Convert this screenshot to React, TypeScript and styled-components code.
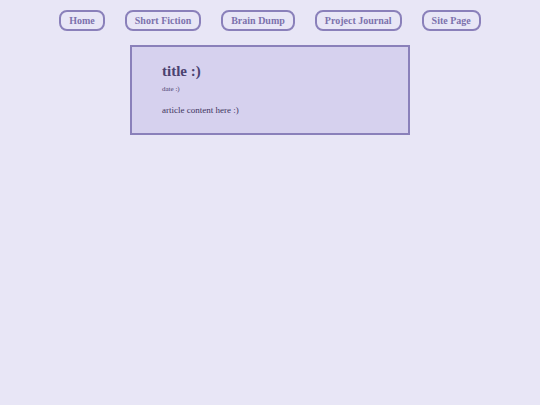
import styled, { createGlobalStyle } from 'styled-components';

const GlobalStyle = createGlobalStyle`
  html, body {
    margin: 0;
    padding: 0;
    background: #e8e6f6;
  }
  body {
    font-family: "Liberation Serif", "Times New Roman", serif;
    min-height: 405px;
  }
`;

const Nav = styled.nav`
  display: flex;
  justify-content: center;
  gap: 20px;
  padding-top: 10px;
`;

const NavButton = styled.a`
  display: flex;
  align-items: center;
  height: 21px;
  box-sizing: border-box;
  padding: 0 8px;
  border: 2px solid #8a80ba;
  border-radius: 8px;
  color: #7c72ad;
  font-size: 10px;
  font-weight: bold;
  text-decoration: none;
`;

const Article = styled.article`
  width: 280px;
  box-sizing: border-box;
  margin: 14px auto 0;
  padding: 15px 30px 17px;
  background: #d6d1ee;
  border: 2px solid #8a80ba;
`;

const Title = styled.h1`
  margin: 0;
  font-size: 15px;
  line-height: 18px;
  font-weight: bold;
  color: #4b4270;
`;

const DateLine = styled.p`
  margin: 5px 0 0;
  font-size: 7px;
  line-height: 9px;
  color: #4b4270;
`;

const Content = styled.p`
  margin: 11px 0 0;
  font-size: 9px;
  line-height: 11px;
  color: #3e3560;
`;

const links = ['Home', 'Short Fiction', 'Brain Dump', 'Project Journal', 'Site Page'];

export default function App() {
  return (
    <>
      <GlobalStyle />
      <Nav>
        {links.map((l) => (
          <NavButton key={l} href="#">{l}</NavButton>
        ))}
      </Nav>
      <Article>
        <Title>title :)</Title>
        <DateLine>date :)</DateLine>
        <Content>article content here :)</Content>
      </Article>
    </>
  );
}
